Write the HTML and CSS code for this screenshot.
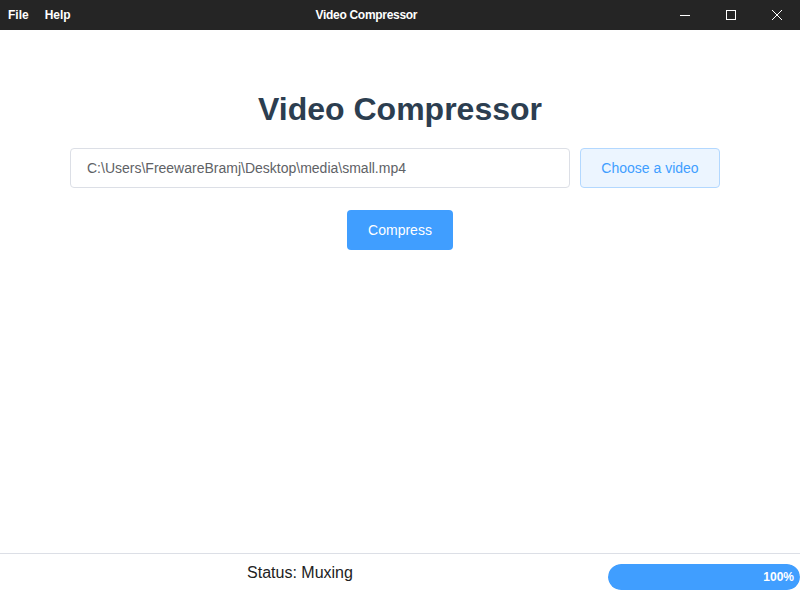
FILE: index.html
```html
<!DOCTYPE html>
<html lang="en">
<head>
    <meta charset="UTF-8">
    <meta name="viewport" content="width=device-width, initial-scale=1.0">
    <title>Video Compressor</title>
    <link rel="stylesheet" href="styles.css">
</head>
<body>
    <div class="titlebar">
        <div class="menu">
            <span>File</span>
            <span>Help</span>
        </div>
        <div class="window-title">Video Compressor</div>
        <div class="window-controls">
            <span class="control">
                <svg width="12" height="12" viewBox="0 0 12 12"><line x1="1" y1="6.5" x2="11" y2="6.5" stroke="#fff" stroke-width="1"/></svg>
            </span>
            <span class="control">
                <svg width="12" height="12" viewBox="0 0 12 12"><rect x="1.5" y="1.5" width="9" height="9" fill="none" stroke="#fff" stroke-width="1"/></svg>
            </span>
            <span class="control">
                <svg width="12" height="12" viewBox="0 0 12 12"><path d="M1 1 L11 11 M11 1 L1 11" stroke="#fff" stroke-width="1"/></svg>
            </span>
        </div>
    </div>

    <div class="main">
        <h1>Video Compressor</h1>
        <div class="file-row">
            <input type="text" class="file-input" value="C:\Users\FreewareBramj\Desktop\media\small.mp4" readonly>
            <button class="choose-btn">Choose a video</button>
        </div>
        <button class="compress-btn">Compress</button>
    </div>

    <div class="footer">
        <div class="status">Status: Muxing</div>
        <div class="progress">
            <div class="progress-bar" style="width: 100%">100%</div>
        </div>
    </div>
</body>
</html>
```

FILE: styles.css
```css
html, body {
    height: 100%;
}

body {
    font-family: "Liberation Sans", Arial, sans-serif;
    margin: 0;
    display: flex;
    flex-direction: column;
    background-color: #fff;
    overflow: hidden;
}

.titlebar {
    height: 30px;
    background-color: #252525;
    color: #fff;
    display: flex;
    align-items: center;
    font-size: 12px;
    font-weight: bold;
}

.menu {
    display: flex;
    gap: 16px;
    padding-left: 8px;
}

.window-title {
    flex: 1;
    text-align: center;
    letter-spacing: -0.3px;
}

.window-controls {
    display: flex;
}

.control {
    width: 46px;
    height: 30px;
    display: flex;
    align-items: center;
    justify-content: center;
}

.main {
    flex: 1;
    display: flex;
    flex-direction: column;
    align-items: center;
}

h1 {
    color: #2c3e50;
    font-size: 32px;
    margin: 61px 0 20px;
    line-height: 37px;
}

.file-row {
    display: flex;
    gap: 10px;
    width: 650px;
    margin-right: 10px;
}

.file-input {
    flex: 1;
    height: 40px;
    box-sizing: border-box;
    border: 1px solid #dcdfe6;
    border-radius: 4px;
    padding: 0 16px;
    font-family: inherit;
    font-size: 14px;
    color: #606266;
    outline: none;
}

.choose-btn {
    width: 140px;
    height: 40px;
    background-color: #ecf5ff;
    border: 1px solid #b3d8ff;
    color: #409eff;
    border-radius: 4px;
    font-family: inherit;
    font-size: 14px;
}

.compress-btn {
    margin-top: 22px;
    width: 106px;
    height: 40px;
    background-color: #409eff;
    border: none;
    color: #fff;
    border-radius: 4px;
    font-family: inherit;
    font-size: 14px;
}

.footer {
    height: 46px;
    border-top: 1px solid #dcdfe6;
    display: flex;
    align-items: flex-start;
}

.status {
    flex: 1;
    text-align: center;
    font-size: 16px;
    line-height: 18px;
    color: #222;
    padding-top: 10px;
}

.progress {
    width: 192px;
    height: 26px;
    margin-left: 8px;
    margin-top: 10px;
    border-radius: 13px;
    background-color: #ebeef5;
    overflow: hidden;
}

.progress-bar {
    height: 100%;
    background-color: #409eff;
    color: #fff;
    font-size: 12px;
    font-weight: bold;
    line-height: 26px;
    text-align: right;
    padding-right: 6px;
    box-sizing: border-box;
    border-radius: 13px;
}
```
